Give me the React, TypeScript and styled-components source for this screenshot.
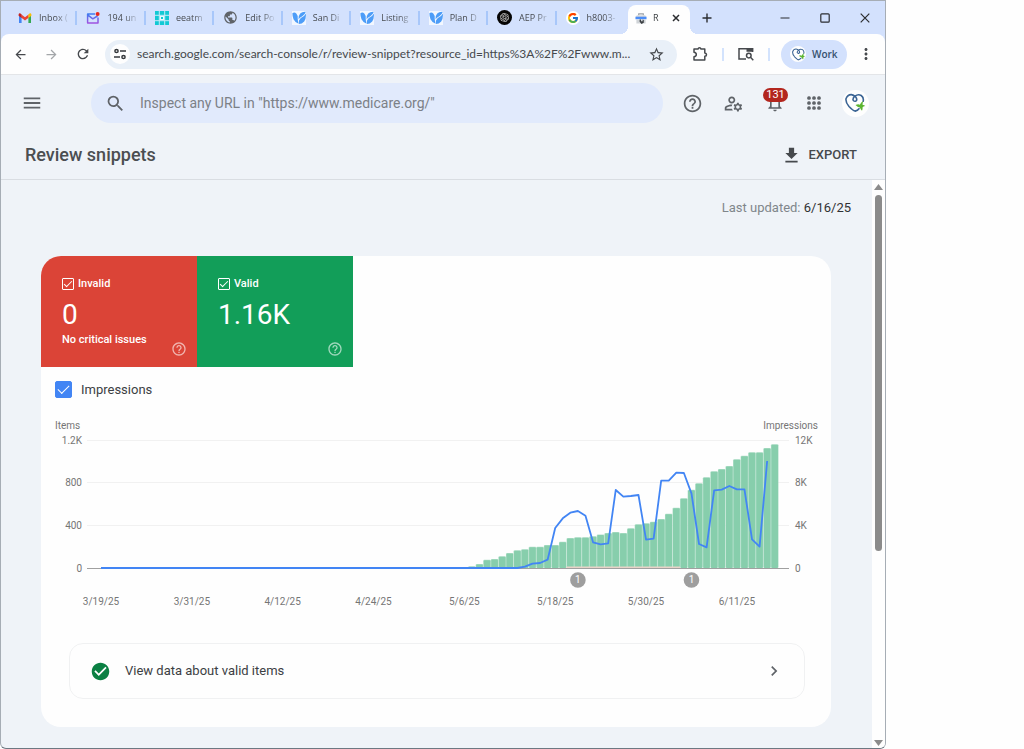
import React from 'react';
import styled, { createGlobalStyle, css } from 'styled-components';
import {
  MdArrowBack, MdArrowForward, MdCheckCircle, MdChevronRight, MdFileDownload, MdHelpOutline,
  MdMenu, MdMoreVert, MdNotificationsNone, MdOutlineManageAccounts, MdPublic,
  MdRefresh, MdSearch, MdStarOutline,
} from 'react-icons/md';
import { FcGoogle } from 'react-icons/fc';
import { SiOpenai } from 'react-icons/si';

const ui = '"Open Sans", "Noto Sans", sans-serif';
const roboto = 'Roboto, sans-serif';

const GlobalStyle = createGlobalStyle`
  * { box-sizing: border-box; }
  body { margin: 0; background: #fefefe; font-family: ${roboto}; color: #3c4043; }
  button { border: 0; padding: 0; background: none; font: inherit; color: inherit; cursor: pointer; }
  svg { display: block; flex: none; }
`;

const Window = styled.div`
  display: flex;
  flex-direction: column;
  min-height: 100vh;
  margin-right: 138px;
  border: 1px solid #a6adb5;
  border-bottom-color: #6d7882;
  border-radius: 0 0 6px 6px;
  background: #eff3f8;
  overflow: hidden;
`;

/* ---------- tab strip ---------- */
const TabStrip = styled.div`
  display: flex;
  height: 33px;
  padding-left: 8px;
  background: #d3e1fd;
`;

const TabList = styled.div`
  display: flex;
  flex: 1;
  min-width: 0;
  align-items: center;
`;

const Tab = styled.button`
  display: flex;
  flex: 1 1 0;
  min-width: 0;
  height: 14px;
  align-items: center;
  gap: 7px;
  padding: 0 2px 0 9px;
  border-right: 2px solid #a8c7fa;
  font-family: ${ui};
  font-size: 9px;
  line-height: 14px;
  color: #474b50;
  &:last-child { border-right-color: transparent; }
`;

const TabTitle = styled.span`
  flex: 1;
  min-width: 0;
  white-space: nowrap;
  text-align: left;
  mask-image: linear-gradient(to right, #000 50%, transparent 92%);
`;

const ActiveTab = styled.div`
  position: relative;
  display: flex;
  align-items: center;
  gap: 6px;
  width: 62px;
  height: 29px;
  margin: 4px 0 0 3px;
  padding: 0 8px 3px 7px;
  border-radius: 8px 8px 0 0;
  background: #fefefe;
  font-family: ${ui};
  font-size: 9px;
  line-height: 14px;
  &::before, &::after {
    content: '';
    position: absolute;
    bottom: 0;
    width: 8px;
    height: 8px;
  }
  &::before { left: -8px; background: radial-gradient(circle at 0 0, transparent 8px, #fefefe 8px); }
  &::after { right: -8px; background: radial-gradient(circle at 100% 0, transparent 8px, #fefefe 8px); }
`;

const StripButton = styled.button<{ $w: number }>`
  display: flex;
  align-items: center;
  justify-content: center;
  width: ${(p) => p.$w}px;
  height: 33px;
  color: #2b2d30;
`;

const Controls = styled.div`
  display: flex;
  margin-left: 41px;
`;

/* ---------- address bar ---------- */
const ToolbarBack = styled.div`
  background: #d3e1fd;
`;

const Toolbar = styled.div`
  display: flex;
  height: 41px;
  align-items: center;
  padding-left: 4px;
  border-radius: 8px 8px 0 0;
  border-bottom: 1px solid #e3e5e8;
  background: #fefefe;
  color: #46494d;
`;

const ToolButton = styled.button<{ $w: number; $faded?: boolean }>`
  display: flex;
  align-items: center;
  justify-content: center;
  width: ${(p) => p.$w}px;
  height: 28px;
  ${(p) => p.$faded && css`color: #a3a6a9;`}
`;

const AddressBar = styled.label`
  display: flex;
  flex: 1;
  min-width: 0;
  height: 29px;
  align-items: center;
  gap: 7px;
  margin-left: 7px;
  padding: 0 7px 0 5px;
  border-radius: 15px;
  background: #e9f0f8;
`;

const SiteInfo = styled.span`
  display: flex;
  width: 20px;
  height: 20px;
  align-items: center;
  justify-content: center;
  border-radius: 50%;
  background: #fefefe;
`;

const AddressInput = styled.input`
  flex: 1;
  min-width: 0;
  padding: 0;
  border: 0;
  outline: 0;
  background: none;
  font: 12px/20px Lato, sans-serif;
  color: #46494d;
`;

const Divider = styled.span`
  width: 2px;
  height: 13px;
  margin: 0 -1px;
  background: #d3e3fd;
`;

const Profile = styled.button`
  display: flex;
  width: 66px;
  height: 29px;
  align-items: center;
  gap: 6px;
  margin-left: 12px;
  padding-left: 9px;
  border-radius: 15px;
  background: #d3e1fd;
  font: 600 10px/16px ${ui};
  color: #35506f;
`;

const Round = styled.span<{ $size: number }>`
  display: flex;
  width: ${(p) => p.$size}px;
  height: ${(p) => p.$size}px;
  align-items: center;
  justify-content: center;
  border-radius: 50%;
  background: #fefefe;
`;

/* ---------- application header ---------- */
const AppHeader = styled.header`
  display: flex;
  height: 56px;
  align-items: center;
  padding: 0 7px 0 19px;
  color: #5f6368;
`;

const IconButton = styled.button`
  position: relative;
  display: flex;
  min-width: 24px;
  height: 28px;
  align-items: center;
  justify-content: center;
`;

const SearchBox = styled.label`
  display: flex;
  flex: 1;
  min-width: 0;
  height: 40px;
  align-items: center;
  gap: 14px;
  margin: 0 8px 0 47px;
  padding: 0 14px;
  border-radius: 20px;
  background: #e1eafc;
`;

const SearchInput = styled.input`
  flex: 1;
  min-width: 0;
  padding: 0;
  border: 0;
  outline: 0;
  background: none;
  font: 14px/20px ${roboto};
  &::placeholder { color: #7c8187; opacity: 1; }
`;

const HeaderActions = styled.div`
  display: grid;
  grid-template-columns: 42px 41px 42px 36px 46px;
  align-items: center;
`;

const Badge = styled.span`
  position: absolute;
  top: -1px;
  left: 50%;
  width: 25px;
  margin-left: -12px;
  border-radius: 7px;
  background: #b3261e;
  font-size: 11px;
  line-height: 14px;
  text-align: center;
  color: #fff;
`;

const TitleRow = styled.div`
  display: flex;
  height: 49px;
  align-items: center;
  justify-content: space-between;
  padding: 0 28px 0 24px;
  border-bottom: 1px solid #d9dde2;
`;

const Title = styled.h1`
  margin: 0;
  font-size: 18px;
  font-weight: 500;
  line-height: 24px;
  color: #4b4e51;
`;

const ExportButton = styled.button`
  display: flex;
  align-items: center;
  gap: 7px;
  font-size: 13px;
  font-weight: 500;
  line-height: 20px;
  color: #46494d;
`;

/* ---------- content ---------- */
const Body = styled.div`
  display: flex;
  flex: 1;
`;

const Content = styled.main`
  flex: 1;
  min-width: 0;
  padding: 0 41px 20px 40px;
`;

const Updated = styled.p`
  height: 76px;
  margin: 0 -20px 0 0;
  padding: 18px 0 0;
  font-size: 13px;
  line-height: 20px;
  text-align: right;
  color: #80868b;
  span { color: #2f3134; }
`;

const Card = styled.section`
  border-radius: 20px;
  background: #fefefe;
  overflow: hidden;
`;

const Tiles = styled.div`
  display: flex;
`;

const Tile = styled.div<{ $color: string }>`
  display: flex;
  flex-direction: column;
  position: relative;
  width: 156px;
  height: 111px;
  padding: 20px 21px 0;
  background: ${(p) => p.$color};
  color: #fff;
`;

const TileLabel = styled.label`
  display: flex;
  align-items: center;
  gap: 4px;
  font-size: 11px;
  font-weight: 500;
  line-height: 16px;
`;

const TileValue = styled.div`
  margin-top: 7px;
  font-size: 28px;
  line-height: 32px;
`;

const TileNote = styled.div`
  margin-top: 1px;
  font-size: 11px;
  font-weight: 500;
  line-height: 16px;
`;

const TileHelp = styled.button`
  position: absolute;
  right: 10px;
  bottom: 10px;
  color: rgba(255, 255, 255, 0.6);
`;

const CheckBox = styled.input<{ $solid?: boolean }>`
  appearance: none;
  display: flex;
  align-items: center;
  justify-content: center;
  flex: none;
  width: ${(p) => (p.$solid ? 17 : 12)}px;
  height: ${(p) => (p.$solid ? 17 : 12)}px;
  margin: 0;
  border: 1px solid ${(p) => (p.$solid ? '#4285f4' : '#fff')};
  border-radius: ${(p) => (p.$solid ? 2 : 1)}px;
  background: ${(p) => (p.$solid ? '#4285f4' : 'transparent')};
  &:checked::after {
    content: '';
    box-sizing: border-box;
    width: ${(p) => (p.$solid ? 11 : 8)}px;
    height: ${(p) => (p.$solid ? 6 : 4)}px;
    margin-top: ${(p) => (p.$solid ? -3 : -2)}px;
    border: solid #fff;
    border-width: 0 0 1px 1px;
    transform: rotate(-45deg);
  }
`;

const SeriesToggle = styled.label`
  display: flex;
  height: 45px;
  align-items: center;
  gap: 9px;
  padding-left: 14px;
  font-size: 13px;
  line-height: 20px;
  color: #3c4043;
`;

const ChartSvg = styled.svg`
  width: 100%;
  font-family: ${roboto};
  font-size: 10px;
  fill: #757575;
`;

const LinkRow = styled.a`
  display: flex;
  height: 56px;
  align-items: center;
  gap: 14px;
  margin: 30px 26px 28px 28px;
  padding: 0 20px;
  border: 1px solid #f0f1f2;
  border-radius: 14px;
  font-size: 13px;
  line-height: 20px;
  color: #3c4043;
  text-decoration: none;
  span { flex: 1; }
`;

const ScrollTrack = styled.div`
  display: flex;
  flex-direction: column;
  width: 13px;
  align-items: center;
  padding: 4px 0 2px;
  background: #fefefe;
`;

const ScrollSpace = styled.div`
  display: flex;
  flex: 1;
  width: 100%;
  justify-content: center;
  padding: 5px 0;
`;

const Thumb = styled.div`
  width: 7px;
  height: 66%;
  border-radius: 4px;
  background: #8b8b8b;
`;

/* ---------- drawings ---------- */
const Gmail = () => (
  <svg width="14" height="14" viewBox="0 0 14 14">
    <path d="M1 3.2V11.5Q1 12 1.5 12H3.6V6Z" fill="#4285f4" />
    <path d="M13 3.2V11.5Q13 12 12.5 12H10.4V6Z" fill="#34a853" />
    <path d="M3.4 3.4 7 6.3 10.6 3.4V6.8L7 9.6 3.4 6.8Z" fill="#ea4335" />
    <path d="M.6 3.4Q1 1.8 2.5 2.6L3.6 3.5V7L.6 4.8Z" fill="#c5221f" />
    <path d="M13.4 3.4Q13 1.8 11.5 2.6L10.4 3.5V7L13.4 4.8Z" fill="#fbbc04" />
  </svg>
);

const MailDot = () => (
  <svg width="14" height="14" viewBox="0 0 14 14" fill="none">
    <defs>
      <linearGradient id="mail" x1="0" y1="0" x2="0" y2="1">
        <stop offset="0" stopColor="#3f7df0" />
        <stop offset="1" stopColor="#a052e0" />
      </linearGradient>
    </defs>
    <path d="M9 3H1.6V12H12V6.5M2 4.2 6.8 7.8 11.5 5" stroke="url(#mail)" strokeWidth="1.5" strokeLinejoin="round" />
    <circle cx="11.6" cy="3" r="2" fill="#e8281e" />
  </svg>
);

const Grid = () => (
  <svg width="14" height="14" viewBox="0 0 14 14">
    <rect width="14" height="14" fill="#12c9d4" />
    <path d="M4.3 0V14M9.7 0V14M0 4.3H14M0 9.7H14" stroke="#c7e9f7" strokeWidth="1" />
    <rect x="4.8" y="4.8" width="4.4" height="4.4" fill="#e3fbff" />
    <rect x="6" y="6" width="2" height="2" fill="#12c9d4" />
  </svg>
);

const Leaves = () => (
  <svg width="14" height="14" viewBox="0 0 14 14">
    <rect width="14" height="14" fill="#f2f7ff" />
    <path d="M.4 2.300Q2.500 .8 4.300 2.600Q6.200 4.800 5.700 7.500L6.200 12.600Q3 11.300 1.500 8.300Q.4 5.500 .4 2.300Z" fill="#4d9df8" />
    <path d="M13.800 .8Q10 .6 8.200 2.500Q6.200 4.800 6.500 8.200Q8 6.200 10.300 5.200Q13 3.700 13.800 .8Z" fill="#4d9df8" />
    <path d="M13.900 2.500Q14.300 7.500 12.200 10.400Q10 12.900 6.800 13Q6.300 9.500 8.200 7.700Q9.500 6.500 11 5.800Q13 4.600 13.900 2.500Z" fill="#4d9df8" />
  </svg>
);

const OpenAi = () => (
  <svg width="15" height="15" viewBox="0 0 15 15">
    <circle cx="7.5" cy="7.5" r="7.5" fill="#050505" />
    <SiOpenai x="3" y="3" width="9" height="9" color="#e6e6e6" />
  </svg>
);

const Console = () => (
  <svg width="12" height="13" viewBox="0 0 13 13">
    <path d="M4 3V1.500H9V3" fill="none" stroke="#9aa0a6" strokeWidth="1.200" />
    <path d="M2 3.200H11L12.500 4.600H.5Z" fill="#c4c8cc" />
    <path d="M.5 4.600H12.500V7.200H.5Z" fill="#4b8df8" />
    <path d="M1.500 7.500H11.500V12H1.500Z" fill="#cfd3d7" />
    <path d="M5 7.500V10L7 12.500L9.500 11V8L8.300 7.500V9.500H6.500V7.500Z" fill="#3c4043" />
  </svg>
);

const HeartLogo = ({ size }: { size: number }) => (
  <svg width={size} height={size} viewBox="0 0 20 20" fill="none" strokeLinecap="round">
    <path
      d="M10.500 18Q8.500 18.300 4 13.500Q.5 9.500 1 5.800Q2.500 1.500 6.300 1.600Q8.600 1.800 10.700 4Q12.600 6.600 11 8Q9 8.900 8 7Q7.800 4.700 10 3.200Q13 .8 16.200 2.500Q19 4.600 18.200 8.300"
      stroke="#3b6494" strokeWidth="1.600"
    />
    <path d="M10.500 18Q12.500 17.500 14 15.700" stroke="#3b6494" strokeWidth="1.600" />
    <path d="M10.500 12Q13.500 10.800 14.800 11.800Q16 9 18.300 8Q17.300 10.500 17.600 12Q19.200 11.600 20 13Q18.300 13.300 17.600 14.200Q17.800 16.500 17 17.800Q15.600 16.300 14.800 14.500Q12.500 14.200 10.500 12Z" fill="#5cb531" />
  </svg>
);

const Tune = () => (
  <svg width="12" height="12" viewBox="0 0 12 12" fill="none" stroke="#36393c" strokeWidth="1.500">
    <circle cx="2.500" cy="3" r="1.600" />
    <path d="M6 3H12M0 9H6" />
    <circle cx="9.500" cy="9" r="1.600" />
  </svg>
);

const Puzzle = () => (
  <svg width="16" height="16" viewBox="0 0 16 16" fill="none" stroke="#46494d" strokeWidth="1.500" strokeLinejoin="round">
    <path d="M2 3H6Q6.300 1.800 7.500 1.800T9 3H12.800V7Q14.500 7.200 14.500 8.700T12.800 10.300V14H2V10.800Q4.300 10.500 4.300 8.500T2 6.200Z" />
  </svg>
);

const TabSearch = () => (
  <svg width="16" height="14" viewBox="0 0 16 14" fill="none" stroke="#46494d" strokeWidth="1.500">
    <path d="M8 12H1V1.800H14.500V5" />
    <path d="M8.500 1H15.200V4.800H8.500Z" fill="#46494d" stroke="none" />
    <circle cx="10.800" cy="8.600" r="2.300" />
    <path d="M12.500 10.300 15.300 13.200" />
  </svg>
);

const AppsDots = () => (
  <svg width="16" height="16" viewBox="0 0 16 16" fill="currentColor">
    {[3, 8, 13].map((y) => [3, 8, 13].map((x) => (
      <rect key={`${x}-${y}`} x={x - 1.8} y={y - 1.8} width="3.600" height="3.600" rx="1.500" />
    )))}
  </svg>
);

/* ---------- chart ---------- */
const items = [
  16, 38, 78, 84, 109, 141, 166, 175, 200, 200, 216, 216, 247, 281, 288, 288, 297, 313, 328, 338, 328,
  372, 409, 419, 434, 459, 509, 566, 653, 734, 794, 850, 906, 928, 956, 1019, 1053, 1084, 1084, 1125, 1159,
];
const firstItemDay = 49;

const impressions = [
  0, 125, 406, 469, 781, 3750, 4656, 5188, 5344, 4906, 2406, 2219, 2313, 7313, 6688, 6750, 6844, 2656,
  2750, 8188, 8188, 8938, 8906, 7000, 2250, 1938, 7281, 7344, 7688, 7375, 7375, 2688, 2000, 10031,
];
const firstImpressionDay = 55;

const BASE = 156;
const PLOT = 128;
const dayX = (day: number) => 60 + day * 7.57;
const dates = ['3/19/25', '3/31/25', '4/12/25', '4/24/25', '5/6/25', '5/18/25', '5/30/25', '6/11/25'];
const ticks: [string, string][] = [['0', '0'], ['400', '4K'], ['800', '8K'], ['1.2K', '12K']];
const notes = [63, 78];

const Chart = () => {
  const line = impressions
    .map((v, i) => `L${dayX(firstImpressionDay + i)} ${BASE - (v / 12000) * PLOT}`)
    .join('');
  return (
    <ChartSvg viewBox="0 0 790 201" role="img" aria-label="Items and impressions by day">
      <text x="14" y="17">Items</text>
      <text x="777" y="17" textAnchor="end">Impressions</text>
      {ticks.map(([left, right], i) => {
        const y = Math.floor(BASE - (i * PLOT) / 3);
        return (
          <g key={left}>
            <path d={`M46 ${y + 0.5}H748`} stroke={i ? '#f1f1f1' : '#a0a0a0'} />
            <text x="41" y={y + 4} textAnchor="end">{left}</text>
            <text x="754" y={y + 4}>{right}</text>
          </g>
        );
      })}
      {items.map((v, i) => {
        const h = (v / 1200) * PLOT;
        const x = dayX(firstItemDay + i) - 3.8;
        return (
          <g key={i}>
            <rect x={x} y={BASE - h} width="7.6" height={h} rx="1" fill="#b4e0cb" />
            <rect x={x + 0.5} y={BASE - h + 0.5} width="6.6" height={Math.max(h - 0.5, 0)} rx="1" fill="#87ceac" />
          </g>
        );
      })}
      <rect x={dayX(62) - 3.8} y={BASE - 1.500} width={15 * 7.57} height="1.500" fill="#e8d3c8" />
      <path d={`M${dayX(0)} ${BASE}${line}`} fill="none" stroke="#4285f4" strokeWidth="1.800" strokeLinejoin="round" />
      {notes.map((day) => (
        <g key={day}>
          <circle cx={dayX(day)} cy="168" r="7.800" fill="#9e9e9e" />
          <text x={dayX(day)} y="171" textAnchor="middle" fill="#fff">1</text>
        </g>
      ))}
      {dates.map((d, i) => (
        <text key={d} x={dayX(i * 12)} y="193" textAnchor="middle">{d}</text>
      ))}
    </ChartSvg>
  );
};

/* ---------- page ---------- */
const tabs: { title: string; icon: React.ReactNode }[] = [
  { title: 'Inbox (', icon: <Gmail /> },
  { title: '194 un', icon: <MailDot /> },
  { title: 'eeatm', icon: <Grid /> },
  { title: 'Edit Po', icon: <MdPublic size={15} color="#5f6368" /> },
  { title: 'San Di', icon: <Leaves /> },
  { title: 'Listing', icon: <Leaves /> },
  { title: 'Plan D', icon: <Leaves /> },
  { title: 'AEP Pr', icon: <OpenAi /> },
  { title: 'h8003-', icon: <Round $size={14}><FcGoogle size={12} /></Round> },
];

export default function App() {
  return (
    <>
      <GlobalStyle />
      <Window>
        <TabStrip>
          <TabList>
            {tabs.map((t) => (
              <Tab key={t.title}>
                {t.icon}
                <TabTitle>{t.title}</TabTitle>
              </Tab>
            ))}
          </TabList>
          <ActiveTab>
            <Console />
            <TabTitle>R</TabTitle>
            <StripButton $w={12} aria-label="Close tab">
              <svg width="8" height="8" viewBox="0 0 8 8" stroke="currentColor" strokeWidth="1.500"><path d="M1 1 7 7M7 1 1 7" /></svg>
            </StripButton>
          </ActiveTab>
          <StripButton $w={34} aria-label="New tab">
            <svg width="10" height="10" viewBox="0 0 10 10" stroke="currentColor" strokeWidth="1.400"><path d="M5 .5V9.500M.5 5H9.500" /></svg>
          </StripButton>
          <Controls>
            <StripButton $w={40} aria-label="Minimize">
              <svg width="10" height="10" viewBox="0 0 10 10" stroke="currentColor" strokeWidth="1.200"><path d="M.5 5H9.500" /></svg>
            </StripButton>
            <StripButton $w={40} aria-label="Maximize">
              <svg width="10" height="10" viewBox="0 0 10 10" fill="none" stroke="currentColor" strokeWidth="1.200"><rect x=".8" y=".8" width="8.400" height="8.400" rx="1" /></svg>
            </StripButton>
            <StripButton $w={40} aria-label="Close">
              <svg width="10" height="10" viewBox="0 0 10 10" stroke="currentColor" strokeWidth="1.200"><path d="M.7 .7 9.300 9.300M9.300 .7 .7 9.300" /></svg>
            </StripButton>
          </Controls>
        </TabStrip>

        <ToolbarBack>
          <Toolbar>
            <ToolButton $w={31} aria-label="Back"><MdArrowBack size={15} /></ToolButton>
            <ToolButton $w={31} $faded aria-label="Forward"><MdArrowForward size={15} /></ToolButton>
            <ToolButton $w={31} aria-label="Reload"><MdRefresh size={16} /></ToolButton>
            <AddressBar>
              <SiteInfo><Tune /></SiteInfo>
              <AddressInput
                aria-label="Address"
                defaultValue="search.google.com/search-console/r/review-snippet?resource_id=https%3A%2F%2Fwww.m..."
              />
              <ToolButton $w={28} type="button" aria-label="Bookmark"><MdStarOutline size={17} /></ToolButton>
            </AddressBar>
            <ToolButton $w={46} aria-label="Extensions"><Puzzle /></ToolButton>
            <Divider />
            <ToolButton $w={46} aria-label="Search tabs"><TabSearch /></ToolButton>
            <Divider />
            <Profile>
              <Round $size={16}><HeartLogo size={13} /></Round>
              Work
            </Profile>
            <ToolButton $w={38} aria-label="Menu"><MdMoreVert size={18} /></ToolButton>
          </Toolbar>
        </ToolbarBack>

        <AppHeader>
          <IconButton aria-label="Main menu"><MdMenu size={22} /></IconButton>
          <SearchBox>
            <MdSearch size={21} />
            <SearchInput aria-label="Inspect URL" placeholder={'Inspect any URL in "https://www.medicare.org/"'} />
          </SearchBox>
          <HeaderActions>
            <IconButton aria-label="Help"><MdHelpOutline size={21} /></IconButton>
            <IconButton aria-label="Users"><MdOutlineManageAccounts size={21} /></IconButton>
            <IconButton aria-label="Notifications">
              <MdNotificationsNone size={20} />
              <Badge>131</Badge>
            </IconButton>
            <IconButton aria-label="Apps"><AppsDots /></IconButton>
            <IconButton aria-label="Account"><Round $size={27}><HeartLogo size={20} /></Round></IconButton>
          </HeaderActions>
        </AppHeader>
        <TitleRow>
          <Title>Review snippets</Title>
          <ExportButton><MdFileDownload size={21} />EXPORT</ExportButton>
        </TitleRow>

        <Body>
          <Content>
            <Updated>Last updated: <span>6/16/25</span></Updated>
            <Card>
              <Tiles>
                <Tile $color="#db4437">
                  <TileLabel><CheckBox type="checkbox" defaultChecked />Invalid</TileLabel>
                  <TileValue>0</TileValue>
                  <TileNote>No critical issues</TileNote>
                  <TileHelp aria-label="About invalid items"><MdHelpOutline size={16} /></TileHelp>
                </Tile>
                <Tile $color="#129e59">
                  <TileLabel><CheckBox type="checkbox" defaultChecked />Valid</TileLabel>
                  <TileValue>1.16K</TileValue>
                  <TileHelp aria-label="About valid items"><MdHelpOutline size={16} /></TileHelp>
                </Tile>
              </Tiles>
              <SeriesToggle><CheckBox type="checkbox" $solid defaultChecked />Impressions</SeriesToggle>
              <Chart />
              <LinkRow href="#valid">
                <MdCheckCircle size={21} color="#0b8043" />
                <span>View data about valid items</span>
                <MdChevronRight size={20} color="#5f6368" />
              </LinkRow>
            </Card>
          </Content>
          <ScrollTrack>
            <svg width="9" height="6" viewBox="0 0 9 6" fill="#8b8b8b"><path d="M4.500 0 9 6H0Z" /></svg>
            <ScrollSpace><Thumb /></ScrollSpace>
            <svg width="9" height="6" viewBox="0 0 9 6" fill="#8b8b8b"><path d="M4.500 6 0 0H9Z" /></svg>
          </ScrollTrack>
        </Body>
      </Window>
    </>
  );
}
